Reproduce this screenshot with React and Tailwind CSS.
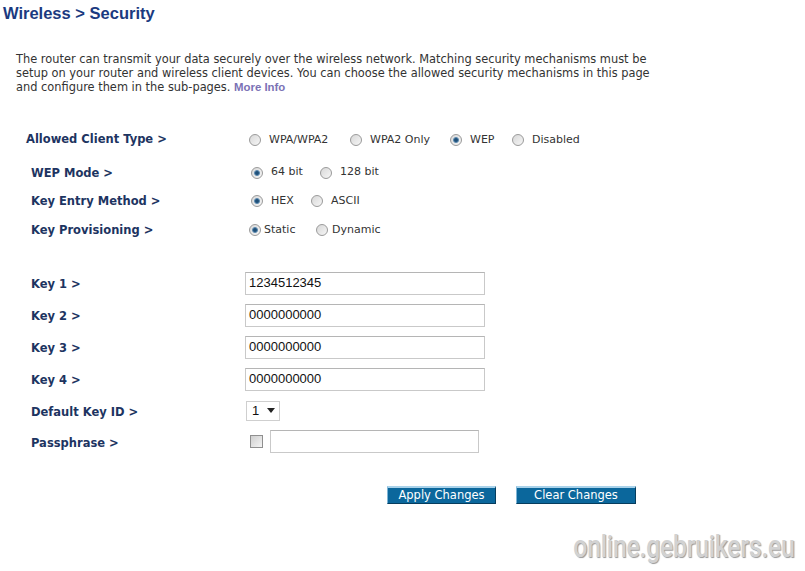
import React from "react";

const body = { fontFamily: '"DejaVu Sans", Verdana, sans-serif' };
const arial = { fontFamily: '"Liberation Sans", Arial, sans-serif' };

// small round option button, drawn the way the old router UI renders it
function Radio({ checked }) {
  return (
    <span className="inline-flex h-[12px] w-[12px] shrink-0 items-center justify-center rounded-full border border-[#9a9a9a] bg-gradient-to-br from-[#d8d8d8] to-[#f6f6f6]">
      {checked && <span className="h-[6px] w-[6px] rounded-full bg-[#1f4f78] border border-[#5d8cb3]" />}
    </span>
  );
}

function Option({ checked, label, w = "", gap = "ml-[8px]" }) {
  return (
    <span className={`inline-flex items-center ${w}`}>
      <Radio checked={checked} />
      <span className={`${gap} text-[11px] text-[#333]`}>{label}</span>
    </span>
  );
}

function Label({ children }) {
  return <span className="text-[11.5px] font-bold text-[#1d3461]">{children}</span>;
}

function Row({ label, children, h }) {
  return (
    <div className={`flex items-center ${h}`}>
      <div className="w-[214px] pl-[31px]">
        <Label>{label}</Label>
      </div>
      <div className="flex items-center">{children}</div>
    </div>
  );
}

function TextBox({ value, w = "w-[240px]" }) {
  return (
    <div
      className={`${w} h-[23px] flex items-center border border-[#c9c9c9] border-t-[#b5b5b5] bg-white px-[3px] text-[13px] text-[#111]`}
      style={arial}
    >
      {value}
    </div>
  );
}

function Button({ children, w }) {
  return (
    <button
      className={`${w} h-[18px] bg-[#0b679c] border-t-2 border-l border-t-[#a9d2ea] border-l-[#7fb5d6] border-b border-r border-b-[#063d5e] border-r-[#063d5e] text-[11.5px] leading-none text-white`}
      style={body}
    >
      {children}
    </button>
  );
}

export default function App() {
  return (
    <div className="relative h-[571px] w-[805px] overflow-hidden bg-white" style={body}>
      <h1 className="pl-[3px] pt-[3px] text-[16.5px] font-bold leading-[20px] text-[#1b3a80]" style={arial}>
        Wireless &gt; Security
      </h1>

      <p className="mt-[29px] ml-[16px] w-[680px] text-[11.4px] leading-[14px] text-[#333]">
        The router can transmit your data securely over the wireless network. Matching security mechanisms must be
        <br />
        setup on your router and wireless client devices. You can choose the allowed security mechanisms in this page
        <br />
        and configure them in the sub-pages.{" "}
        <span className="font-bold text-[#7b72b5]" style={arial}>More Info</span>
      </p>

      <div className="mt-[32px] flex h-[24px] items-center">
        <div className="w-[249px] pl-[26px]">
          <Label>Allowed Client Type &gt;</Label>
        </div>
        <div className="flex items-center pt-[4px]">
          <Option label="WPA/WPA2" w="w-[101px]" />
          <Option label="WPA2 Only" w="w-[100px]" />
          <Option checked label="WEP" w="w-[62px]" />
          <Option label="Disabled" />
        </div>
      </div>

      <div className="mt-[7px]">
        <div className="flex h-[29px] items-center">
          <div className="w-[251px] pl-[31px]"><Label>WEP Mode &gt;</Label></div>
          <div className="flex items-center pt-[2px]">
            <Option checked label="64 bit" w="w-[69px]" />
            <Option label="128 bit" />
          </div>
        </div>
        <div className="flex h-[28px] items-center">
          <div className="w-[251px] pl-[31px]"><Label>Key Entry Method &gt;</Label></div>
          <div className="flex items-center pt-[2px]">
            <Option checked label="HEX" w="w-[60px]" />
            <Option label="ASCII" />
          </div>
        </div>
        <div className="flex h-[30px] items-center">
          <div className="w-[249px] pl-[31px]"><Label>Key Provisioning &gt;</Label></div>
          <div className="flex items-center pt-[2px]">
            <Option checked label="Static" w="w-[67px]" gap="ml-[3px]" />
            <Option label="Dynamic" gap="ml-[4px]" />
          </div>
        </div>
      </div>

      <div className="mt-[23px]">
        <Row label="Key 1 >" h="h-[32px]">
          <div className="ml-[31px]"><TextBox value="1234512345" /></div>
        </Row>
        <Row label="Key 2 >" h="h-[32px]">
          <div className="ml-[31px]"><TextBox value="0000000000" /></div>
        </Row>
        <Row label="Key 3 >" h="h-[32px]">
          <div className="ml-[31px]"><TextBox value="0000000000" /></div>
        </Row>
        <Row label="Key 4 >" h="h-[32px]">
          <div className="ml-[31px]"><TextBox value="0000000000" /></div>
        </Row>
        <Row label="Default Key ID >" h="h-[31px]">
          <div
            className="ml-[32px] flex h-[20px] w-[34px] items-center justify-between border border-[#cfcfcf] bg-white pl-[5px] pr-[4px] text-[13px] text-[#111]"
            style={arial}
          >
            1
            <svg width="8" height="5" viewBox="0 0 8 5"><path d="M0 0h8L4 5z" fill="#222" /></svg>
          </div>
        </Row>
        <Row label="Passphrase >" h="h-[31px]">
          <div className="ml-[36px] flex items-center">
            <span className="h-[13px] w-[13px] border border-[#8f8f8f] bg-gradient-to-br from-[#cfcfcf] to-[#f4f4f4]" />
            <div className="ml-[7px]"><TextBox value="" w="w-[209px]" /></div>
          </div>
        </Row>
      </div>

      <div className="mt-[29px] flex gap-[20px] pl-[387px]">
        <Button w="w-[109px]">Apply Changes</Button>
        <Button w="w-[120px]">Clear Changes</Button>
      </div>

      <div
        className="absolute right-[10px] bottom-[1px] origin-right scale-x-[0.8] text-[31px] font-medium tracking-[-0.3px] text-[#d2d2d2]"
        style={{ fontFamily: "Roboto, sans-serif", textShadow: "1px 1px 1px #9a9a9a" }}
      >
        online.gebruikers.eu
      </div>
    </div>
  );
}
